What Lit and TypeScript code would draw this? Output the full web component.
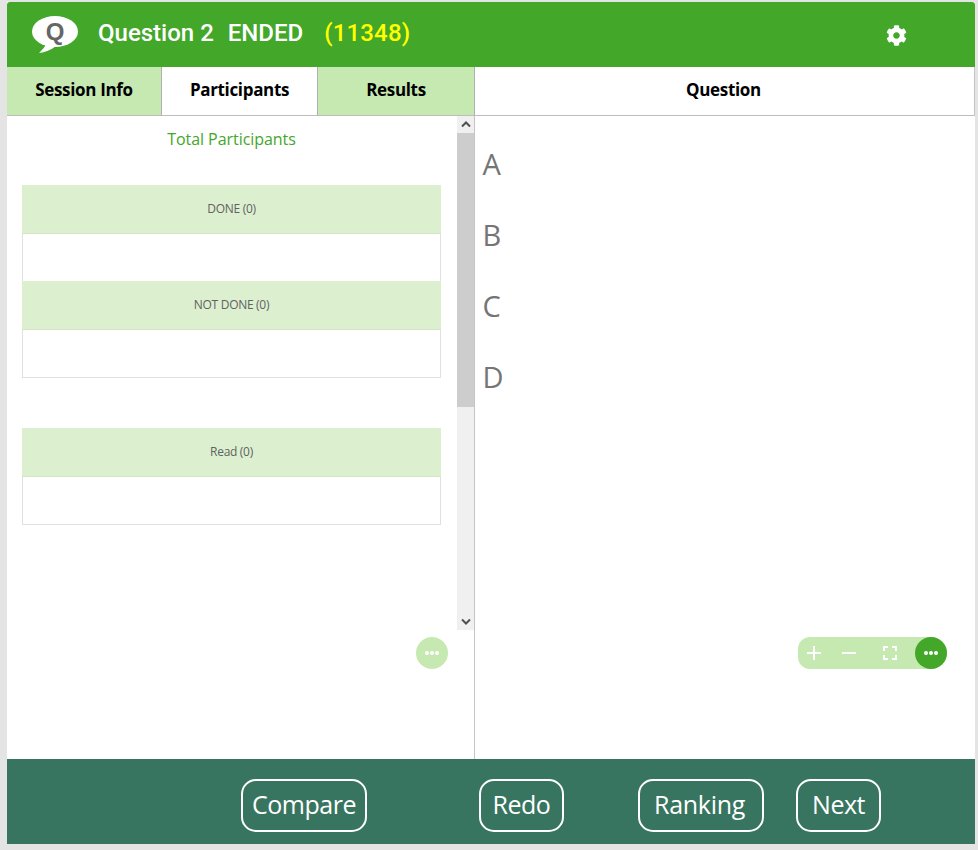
import { LitElement, html, css, svg } from "lit";
import { customElement } from "lit/decorators.js";

const dots = html`<svg class="dots" viewBox="0 0 16 6" width="16" height="6"><circle cx="3" cy="3" r="2" fill="#fff"/><circle cx="8" cy="3" r="2" fill="#fff"/><circle cx="13" cy="3" r="2" fill="#fff"/></svg>`;

@customElement("app-root")
export class AppRoot extends LitElement {
  static styles = css`
    :host { display: block; height: 850px; box-sizing: border-box; background: #e4e4e4; padding: 2px 3px 6px 7px; font-family: "Open Sans", "Noto Sans", sans-serif; overflow: hidden; }
    * { box-sizing: border-box; }
    .app { height: 842px; display: flex; flex-direction: column; background: #fff; }
    .header { height: 65px; flex: none; background: #43a72a; display: flex; align-items: center; padding: 0 0 3px 25px; color: #fff; font-family: Roboto, sans-serif; font-weight: 500; font-size: 24px; border-radius: 3px 3px 0 0; }
    .logo { position: relative; width: 46px; height: 38px; margin-right: 20px; margin-top: 4px; flex: none; }
    .logo svg { display: block; }
    .logo span { position: absolute; left: 0; width: 46px; top: 1px; text-align: center; font: 700 24px/30px "Liberation Sans", sans-serif; color: #666; }
    .h-end { margin-left: 14px; }
    .h-code { margin-left: 21px; color: #ffff00; letter-spacing: 0.15px; }
    .gear { margin-left: auto; margin-right: 68px; margin-top: 5px; display: block; }
    .tabs { height: 49px; flex: none; display: flex; }
    .tab { display: flex; align-items: center; justify-content: center; padding-bottom: 4px; font-weight: 700; font-size: 17px; letter-spacing: -0.33px; color: #000; background: #c6e9b2; border-bottom: 1px solid #bdbdbd; border-right: 1px solid #b0b0b0; }
    .tab.on { background: #fff; }
    .t1 { width: 155px; } .t2 { width: 156px; } .t3 { width: 157px; }
    .t4 { flex: 1; background: #fff; padding-right: 2px; border-right: 1px solid #c4c4c4; }
    .main { flex: 1; min-height: 0; display: flex; }
    .left { width: 468px; flex: none; position: relative; border-right: 1px solid #c4c4c4; }
    .scrollwrap { height: 514px; display: flex; }
    .content { flex: 1; padding: 0 16px 0 15px; }
    .title { height: 69px; padding-top: 10px; text-align: center; color: #43a72a; font-size: 16px; line-height: 26px; letter-spacing: -0.05px; }
    .group { display: block; border: 1px solid #e0e0e0; border-top: 0; margin-bottom: 50px; }
    .ghead { height: 49px; background: #dcf0d0; border-bottom: 1px solid #d2e6c6; display: flex; align-items: center; justify-content: center; font-size: 12px; letter-spacing: -0.3px; color: #616161; margin: 0 -1px; padding-bottom: 1px; }
    .gbody { height: 47px; background: #fff; }
    .scroll { width: 17px; flex: none; background: #f0f0f0; display: flex; flex-direction: column; }
    .sbtn { height: 17px; flex: none; display: flex; align-items: center; justify-content: center; }
    .thumb { height: 274px; flex: none; background: #cdcdcd; }
    .track { flex: 1; }
    .fab { position: absolute; left: 409px; top: 521px; width: 32px; height: 32px; border-radius: 50%; background: #c6e9b2; display: flex; align-items: center; justify-content: center; }
    .right { flex: 1; position: relative; padding: 27px 0 0 7.500px; }
    .opt { height: 71px; font-size: 29px; line-height: 42px; color: #757575; letter-spacing: -0.5px; }
    .zoom { position: absolute; left: 323px; top: 521px; width: 149px; height: 32px; border-radius: 12px 16px 16px 12px; background: #c6e9b2; }
    .zoom svg.i { position: absolute; top: 8px; }
    .zi1 { left: 8px; } .zi2 { left: 43px; } .zi3 { left: 84px; }
    .zfab { position: absolute; right: 0; top: 0; width: 32px; height: 32px; border-radius: 50%; background: #43a72a; display: flex; align-items: center; justify-content: center; }
    .footer { height: 85px; flex: none; background: #387560; display: flex; align-items: flex-start; padding: 20px 0 0 234px; }
    .btn { height: 53px; border: 2px solid #fff; border-radius: 15px; color: #fff; font-size: 25px; letter-spacing: -0.5px; display: flex; align-items: center; justify-content: center; padding: 0 0 3px; flex: none; }
    .b1 { width: 126px; margin-right: 112px; }
    .b2 { width: 85px; margin-right: 74px; }
    .b3 { width: 126px; margin-right: 32px; letter-spacing: -0.3px; padding-right: 3px; }
    .b4 { width: 85px; }
    .dots { display: block; }
  `;

  private group(rows: string[]) {
    return html`<div class="group">${rows.map(
      (r) => html`<div class="ghead">${r}</div><div class="gbody"></div>`
    )}</div>`;
  }

  render() {
    return html`<div class="app">
      <div class="header">
        <div class="logo">
          <svg width="46" height="38" viewBox="0 0 46 38">
            <ellipse cx="23" cy="15.500" rx="23" ry="15.500" fill="#fff"/>
            <path d="M14 28C13 31 10 34 7 37 13 36.500 19 34 24 30Z" fill="#fff"/>
          </svg>
          <span>Q</span>
        </div>
        <span>Question 2</span>
        <span class="h-end">ENDED</span>
        <span class="h-code">(11348)</span>
        <svg class="gear" width="21" height="21" viewBox="0 0 512 512">
          ${svg`<path fill="#fff" d="M487.400 315.700l-42.600-24.600c4.300-23.200 4.300-47 0-70.200l42.600-24.600c4.900-2.800 7.100-8.600 5.500-14-11.100-35.600-30-67.800-54.700-94.600-3.800-4.100-10-5.100-14.800-2.300L380.800 110c-17.900-15.400-38.500-27.300-60.800-35.100V25.800c0-5.600-3.900-10.500-9.400-11.700-36.700-8.200-74.300-7.800-109.200 0-5.500 1.200-9.400 6.100-9.400 11.700V75c-22.200 7.900-42.800 19.800-60.800 35.100L88.700 85.500c-4.900-2.800-11-1.900-14.800 2.300-24.700 26.700-43.600 58.900-54.700 94.600-1.700 5.400.6 11.200 5.500 14L67.300 221c-4.300 23.200-4.300 47 0 70.200l-42.600 24.600c-4.900 2.800-7.100 8.600-5.500 14 11.100 35.600 30 67.800 54.700 94.600 3.800 4.100 10 5.100 14.800 2.300l42.600-24.600c17.900 15.400 38.500 27.300 60.800 35.100v49.200c0 5.600 3.900 10.500 9.400 11.700 36.700 8.200 74.300 7.800 109.200 0 5.500-1.200 9.400-6.100 9.400-11.700v-49.200c22.200-7.900 42.800-19.800 60.800-35.100l42.600 24.600c4.900 2.800 11 1.900 14.800-2.300 24.700-26.700 43.600-58.900 54.700-94.600 1.500-5.500-.7-11.300-5.600-14.100zM256 336c-44.100 0-80-35.900-80-80s35.900-80 80-80 80 35.900 80 80-35.900 80-80 80z"/>`}
        </svg>
      </div>
      <div class="tabs">
        <div class="tab t1">Session Info</div>
        <div class="tab t2 on">Participants</div>
        <div class="tab t3">Results</div>
        <div class="tab t4">Question</div>
      </div>
      <div class="main">
        <div class="left">
          <div class="scrollwrap">
            <div class="content">
              <div class="title">Total Participants</div>
              ${this.group(["DONE (0)", "NOT DONE (0)"])}
              ${this.group(["Read (0)"])}
            </div>
            <div class="scroll">
              <div class="sbtn"><svg width="10" height="7" viewBox="0 0 10 7"><path d="M1 5.500l4-4 4 4" fill="none" stroke="#505050" stroke-width="2"/></svg></div>
              <div class="thumb"></div>
              <div class="track"></div>
              <div class="sbtn"><svg width="10" height="7" viewBox="0 0 10 7"><path d="M1 1.500l4 4 4-4" fill="none" stroke="#505050" stroke-width="2"/></svg></div>
            </div>
          </div>
          <div class="fab">${dots}</div>
        </div>
        <div class="right">
          <div class="opt">A</div>
          <div class="opt">B</div>
          <div class="opt">C</div>
          <div class="opt">D</div>
          <div class="zoom">
            <svg class="i zi1" width="16" height="16" viewBox="0 0 16 16"><path d="M8 1v14M1 8h14" stroke="#fff" stroke-width="2"/></svg>
            <svg class="i zi2" width="16" height="16" viewBox="0 0 16 16"><path d="M1 8h14" stroke="#fff" stroke-width="2"/></svg>
            <svg class="i zi3" width="16" height="16" viewBox="0 0 16 16"><path d="M2 6V2h4M10 2h4v4M14 10v4h-4M6 14H2v-4" fill="none" stroke="#fff" stroke-width="2"/></svg>
            <div class="zfab">${dots}</div>
          </div>
        </div>
      </div>
      <div class="footer">
        <div class="btn b1">Compare</div>
        <div class="btn b2">Redo</div>
        <div class="btn b3">Ranking</div>
        <div class="btn b4">Next</div>
      </div>
    </div>`;
  }
}
